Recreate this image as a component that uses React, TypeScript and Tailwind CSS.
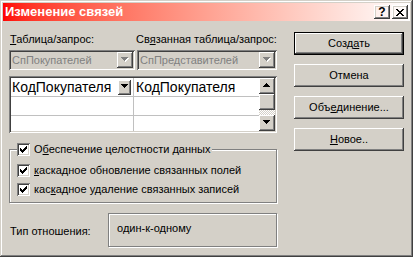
const raised =
  "shadow-[inset_-1px_-1px_#404040,inset_1px_1px_#ffffff,inset_-2px_-2px_#808080,inset_2px_2px_#d4d0c8]";
const sunken =
  "shadow-[inset_1px_1px_#808080,inset_-1px_-1px_#ffffff,inset_2px_2px_#404040,inset_-2px_-2px_#d4d0c8]";
const etched = "border border-[#808080] shadow-[inset_1px_1px_#ffffff,1px_1px_#ffffff]";

function Arrow({ up = false, disabled = false }: { up?: boolean; disabled?: boolean }) {
  const d = up ? "M4 0h1v1h1v1h1v1h1v1h-7v-1h1v-1h1v-1h1z" : "M1 0h7v1h-1v1h-1v1h-1v1h-1v-1h-1v-1h-1v-1h-1z";
  return (
    <svg width="10" height="6" viewBox="0 0 10 6" shapeRendering="crispEdges">
      {disabled && <path d={d} fill="#ffffff" transform="translate(1 1)" />}
      <path d={d} fill={disabled ? "#808080" : "#000000"} />
    </svg>
  );
}

function Combo({ text, className }: { text: string; className: string }) {
  return (
    <div className={`h-[20px] flex items-center bg-[#d4d0c8] ${sunken} ${className}`}>
      <span className="flex-1 pl-[3px] text-[#808080] text-[11px] whitespace-nowrap overflow-hidden">{text}</span>
      <div className={`w-[16px] h-[16px] mr-[2px] flex items-center justify-center ${raised}`}>
        <Arrow disabled />
      </div>
    </div>
  );
}

function CheckBox() {
  return (
    <div className={`w-[13px] h-[13px] bg-white shrink-0 ${sunken}`}>
      <svg width="13" height="13" viewBox="0 0 13 13" shapeRendering="crispEdges">
        <path
          d="M3 5h1v3h-1zM4 6h1v3h-1zM5 7h1v3h-1zM6 6h1v3h-1zM7 5h1v3h-1zM8 4h1v3h-1zM9 3h1v3h-1z"
          fill="#000000"
        />
      </svg>
    </div>
  );
}

function Button({ children, main = false }: { children: React.ReactNode; main?: boolean }) {
  return (
    <div className={`h-[23px] ${main ? "border border-black" : ""}`}>
      <div className={`h-full flex items-center justify-center text-[11px] ${raised}`}>{children}</div>
    </div>
  );
}

export default function App() {
  return (
    <div
      className={`w-[413px] h-[257px] bg-[#d4d0c8] p-[3px] font-['Liberation_Sans',Arial,sans-serif] text-black shadow-[inset_-1px_-1px_#404040,inset_1px_1px_#d4d0c8,inset_-2px_-2px_#808080,inset_2px_2px_#ffffff]`}
    >
      <div className="h-[18px] flex items-center bg-linear-to-r from-[#ff0000] to-[#ffffff] pl-[2px] pr-[2px]">
        <span className="flex-1 text-white font-bold text-[13px]">Изменение связей</span>
        <div className={`w-[16px] h-[14px] flex items-center justify-center text-[12px] font-bold leading-none ${raised}`}>
          ?
        </div>
        <div className={`w-[16px] h-[14px] ml-[2px] flex items-center justify-center ${raised}`}>
          <svg width="8" height="7" viewBox="0 0 8 7" shapeRendering="crispEdges">
            <path d="M0 0h2v1h1v1h2v-1h1v-1h2v1h-1v1h-1v1h-1v1h1v1h1v1h1v1h-2v-1h-1v-1h-2v1h-1v1h-2v-1h1v-1h1v-1h1v-1h-1v-1h-1v-1h-1z" fill="#000" />
          </svg>
        </div>
      </div>

      <div className="flex pl-[6px] pt-[11px]">
        <div className="w-[268px] flex flex-col">
          <div className="flex text-[11px] leading-[14px] whitespace-nowrap">
            <span className="w-[127px] pl-[1px]">
              <u>Т</u>аблица/запрос:
            </span>
            <span>
              Св<u>я</u>занная таблица/запрос:
            </span>
          </div>

          <div className="flex mt-[4px] gap-[2px]">
            <Combo text="СпПокупателей" className="w-[126px]" />
            <Combo text="СпПредставителей" className="flex-1" />
          </div>

          <div className={`mt-[6px] h-[57px] bg-white p-[2px] flex ${sunken}`}>
            <div className="flex-1 flex flex-col text-[14px]">
              <div className="h-[19px] flex border-b border-[#c0c0c0]">
                <div className="w-[123px] flex items-center pl-[1px] border-r border-[#c0c0c0]">
                  <span className="flex-1">КодПокупателя</span>
                  <div className={`w-[13px] h-[15px] mr-[2px] bg-[#d4d0c8] flex items-center justify-center ${raised}`}>
                    <Arrow />
                  </div>
                </div>
                <div className="flex-1 flex items-center pl-[2px]">КодПокупателя</div>
              </div>
              <div className="h-[19px] flex border-b border-[#c0c0c0]">
                <div className="w-[123px] border-r border-[#c0c0c0]" />
              </div>
              <div className="flex-1 flex">
                <div className="w-[123px] border-r border-[#c0c0c0]" />
              </div>
            </div>
            <div className="w-[16px] flex flex-col">
              <div className={`h-[16px] bg-[#d4d0c8] flex items-center justify-center ${raised}`}>
                <Arrow up />
              </div>
              <div className={`h-[16px] bg-[#d4d0c8] ${raised}`} />
              <div className="flex-1 bg-[repeating-conic-gradient(#ffffff_0_25%,#d4d0c8_0_50%)] bg-[length:2px_2px]" />
              <div className={`h-[16px] bg-[#d4d0c8] flex items-center justify-center ${raised}`}>
                <Arrow />
              </div>
            </div>
          </div>

          <fieldset className={`mt-[7px] h-[63px] pl-[7px] text-[11px] whitespace-nowrap ${etched}`}>
            <legend className="flex items-center h-[18px] pr-[2px] bg-[#d4d0c8]">
              <CheckBox />
              <span className="ml-[4px]">
                О<u>б</u>еспечение целостности данных
              </span>
            </legend>
            <div className="flex items-center h-[20px] mt-[2px]">
              <CheckBox />
              <span className="ml-[4px]">
                <u>к</u>аскадное обновление связанных полей
              </span>
            </div>
            <div className="flex items-center h-[18px]">
              <CheckBox />
              <span className="ml-[4px]">
                кас<u>к</u>адное удаление связанных записей
              </span>
            </div>
          </fieldset>

          <div className="flex mt-[10px] text-[11px] leading-[14px]">
            <div className="w-[99px] pl-[1px] pt-[11px]">Тип отношения:</div>
            <div className={`flex-1 h-[34px] pl-[8px] pt-[7px] ${etched}`}>один-к-одному</div>
          </div>
        </div>

        <div className="ml-[17px] w-[110px] flex flex-col gap-[9px]">
          <Button main>
            Созд<u>а</u>ть
          </Button>
          <Button>Отмена</Button>
          <Button>
            Объ<u>е</u>динение...
          </Button>
          <Button>
            <u>Н</u>овое..
          </Button>
        </div>
      </div>
    </div>
  );
}
